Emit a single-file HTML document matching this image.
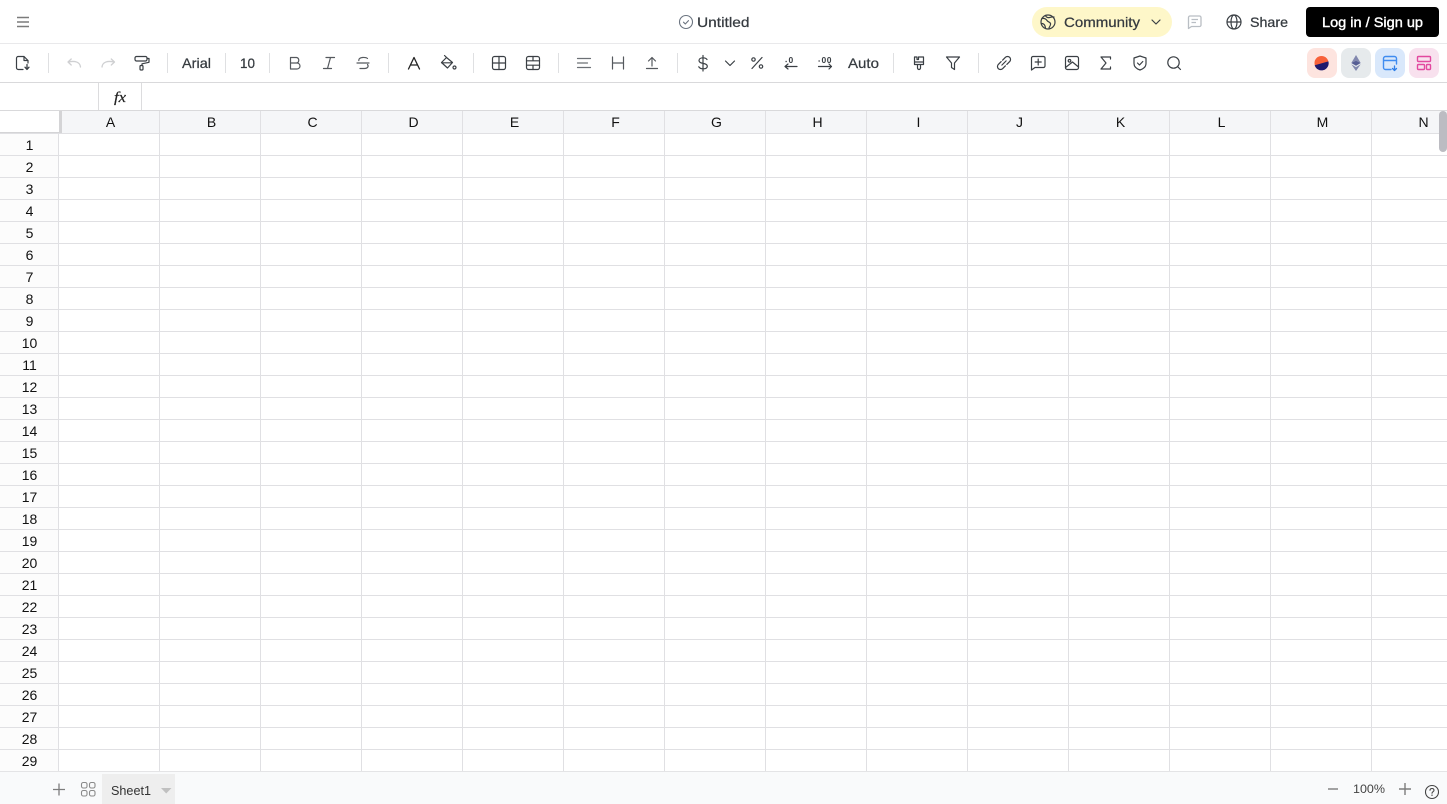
<!DOCTYPE html>
<html lang="en">
<head>
<meta charset="utf-8">
<title>Untitled</title>
<style>
html,body{margin:0;padding:0;background:#fff;width:1447px;height:804px;overflow:hidden}
svg{display:block;position:absolute;left:0;top:0}
text{font-family:"Liberation Sans",Arial,sans-serif;fill:#000}
.ui{fill:#363b40;font-size:14px;stroke:#363b40;stroke-width:.25}
.i{fill:none;stroke:#3a3f44;stroke-width:1.2;stroke-linecap:round;stroke-linejoin:round}
.g{fill:none;stroke:#55595e;stroke-width:1.2;stroke-linecap:round;stroke-linejoin:round}
.h{font-size:14px;text-anchor:middle;fill:#111}
</style>
</head>
<body>
<svg width="1447" height="804" viewBox="0 0 1447 804" xmlns="http://www.w3.org/2000/svg">
<rect width="1447" height="804" fill="#fff"/>

<!-- header backgrounds -->
<rect x="59" y="111" width="1388" height="22" fill="#f5f6f8"/>
<rect x="0" y="134" width="58" height="637" fill="#fcfcfc"/>
<rect x="59" y="111" width="3" height="22" fill="#d4d4d6"/>
<rect x="0" y="132" width="62" height="2" fill="#d4d4d6"/>

<!-- grid -->
<path stroke="#e0e0e3" stroke-width="1" fill="none" d="M58.500 134V771M159.500 111V771M260.500 111V771M361.500 111V771M462.500 111V771M563.500 111V771M664.500 111V771M765.500 111V771M866.500 111V771M967.500 111V771M1068.500 111V771M1169.500 111V771M1270.500 111V771M1371.500 111V771M0 133.500H1447M0 155.500H1447M0 177.500H1447M0 199.500H1447M0 221.500H1447M0 243.500H1447M0 265.500H1447M0 287.500H1447M0 309.500H1447M0 331.500H1447M0 353.500H1447M0 375.500H1447M0 397.500H1447M0 419.500H1447M0 441.500H1447M0 463.500H1447M0 485.500H1447M0 507.500H1447M0 529.500H1447M0 551.500H1447M0 573.500H1447M0 595.500H1447M0 617.500H1447M0 639.500H1447M0 661.500H1447M0 683.500H1447M0 705.500H1447M0 727.500H1447M0 749.500H1447"/>

<!-- bars lines -->
<path stroke="#e9e9eb" d="M0 43.500H1447"/>
<path stroke="#d9d9db" d="M0 82.500H1447M0 110.500H1447"/>
<path stroke="#dcdcde" d="M98.500 83V110M141.500 83V110"/>

<!-- column letters -->
<text class="h" x="110.500" y="127">A</text><text class="h" x="211.500" y="127">B</text><text class="h" x="312.500" y="127">C</text><text class="h" x="413.500" y="127">D</text><text class="h" x="514.500" y="127">E</text><text class="h" x="615.500" y="127">F</text><text class="h" x="716.500" y="127">G</text><text class="h" x="817.500" y="127">H</text><text class="h" x="918.500" y="127">I</text><text class="h" x="1019.500" y="127">J</text><text class="h" x="1120.500" y="127">K</text><text class="h" x="1221.500" y="127">L</text><text class="h" x="1322.500" y="127">M</text><text class="h" x="1423.500" y="127">N</text>

<!-- row numbers -->
<text class="h" x="29.500" y="150">1</text><text class="h" x="29.500" y="172">2</text><text class="h" x="29.500" y="194">3</text><text class="h" x="29.500" y="216">4</text><text class="h" x="29.500" y="238">5</text><text class="h" x="29.500" y="260">6</text><text class="h" x="29.500" y="282">7</text><text class="h" x="29.500" y="304">8</text><text class="h" x="29.500" y="326">9</text><text class="h" x="29.500" y="348">10</text><text class="h" x="29.500" y="370">11</text><text class="h" x="29.500" y="392">12</text><text class="h" x="29.500" y="414">13</text><text class="h" x="29.500" y="436">14</text><text class="h" x="29.500" y="458">15</text><text class="h" x="29.500" y="480">16</text><text class="h" x="29.500" y="502">17</text><text class="h" x="29.500" y="524">18</text><text class="h" x="29.500" y="546">19</text><text class="h" x="29.500" y="568">20</text><text class="h" x="29.500" y="590">21</text><text class="h" x="29.500" y="612">22</text><text class="h" x="29.500" y="634">23</text><text class="h" x="29.500" y="656">24</text><text class="h" x="29.500" y="678">25</text><text class="h" x="29.500" y="700">26</text><text class="h" x="29.500" y="722">27</text><text class="h" x="29.500" y="744">28</text><text class="h" x="29.500" y="766">29</text>

<!-- scrollbar -->
<rect x="1439" y="111" width="8" height="41" rx="4" fill="#bcbcc2"/>

<!-- top bar -->
<path d="M17 17.500H29M17 22H29M17 26.500H29" fill="none" stroke="#7b7b7b" stroke-width="1.500"/>
<circle cx="686" cy="22" r="6.500" fill="none" stroke="#6b7480" stroke-width="1.100"/>
<path d="M683.500 22.200l1.800 1.800 3.200-3.400" fill="none" stroke="#6b7480" stroke-width="1.100" stroke-linecap="round" stroke-linejoin="round"/>
<text class="ui" x="697" y="27" textLength="52.500" lengthAdjust="spacingAndGlyphs">Untitled</text>

<rect x="1032" y="7" width="140" height="30" rx="15" fill="#fef7c9"/>
<circle cx="1048" cy="22" r="7" class="i" stroke-width="1.300"/>
<path class="i" d="M1042 18.500c2.500-.5 4 .5 5 2s3 1.500 3.500 3-1 3-1.500 4.500M1045.500 15.500c.5 1.500 2 2.500 4 2s3-.8 4.500-.5M1041.500 23.500c2 0 3 1 3.500 2.500s.5 2 .5 2.500" />
<text class="ui" x="1064" y="27" textLength="76" lengthAdjust="spacingAndGlyphs">Community</text>
<path class="i" d="M1152 20l4 4 4-4" stroke-width="1.400"/>

<path d="M1188.500 17.500a1.500 1.500 0 0 1 1.500-1.500h9.500a1.500 1.500 0 0 1 1.500 1.500v7.500a1.500 1.500 0 0 1-1.500 1.500h-8l-3 2z" fill="none" stroke="#b9bec4" stroke-width="1.300" stroke-linejoin="round"/>
<path d="M1191.500 19.500h6.500M1191.500 22.500h4.500" stroke="#b9bec4" stroke-width="1.200" fill="none"/>

<circle cx="1234" cy="22" r="7" class="i" stroke-width="1.300"/>
<ellipse cx="1234" cy="22" rx="3" ry="7" class="i"/>
<path class="i" d="M1227 22H1241"/>
<text class="ui" x="1250" y="27" textLength="38" lengthAdjust="spacingAndGlyphs">Share</text>

<rect x="1306" y="7" width="133" height="30" rx="4" fill="#000"/>
<text x="1322" y="27" font-size="14" style="fill:#fff;stroke:#fff;stroke-width:.4" textLength="101" lengthAdjust="spacingAndGlyphs">Log in / Sign up</text>

<!-- separators -->
<path stroke="#dfe0e2" d="M48.500 53V73M167.500 53V73M225.500 53V73M269.500 53V73M388.500 53V73M473.500 53V73M558.500 53V73M677.500 53V73M893.500 53V73M978.500 53V73"/>

<!-- toolbar icons -->
<path class="i" stroke-width="1.300" d="M28 63V60.500L24 56.500H18.200A1.700 1.700 0 0 0 16.500 58.200V67.800A1.700 1.700 0 0 0 18.200 69.500H23M24 56.500V60.500H28"/>
<path d="M27 64.500V69M25 67.200L27 69.400L29 67.200" fill="none" stroke="#3a3f44" stroke-width="1.300" stroke-linecap="round" stroke-linejoin="round"/>

<path d="M80.500 67C80 62 75 60.500 68.500 62M71.200 59L68 62L71.200 65" fill="none" stroke="#cfd0d2" stroke-width="1.300" stroke-linecap="round" stroke-linejoin="round"/>
<path d="M102 67C102.500 62 107.500 60.500 114 62M111.300 59L114.500 62L111.300 65" fill="none" stroke="#cfd0d2" stroke-width="1.300" stroke-linecap="round" stroke-linejoin="round"/>

<rect x="135" y="56.500" width="12" height="4.500" rx="1.500" class="i" stroke-width="1.300"/>
<path class="i" stroke-width="1.300" d="M147 58.500H149V62.300L142 63.800V65.500"/>
<rect x="140" y="65.500" width="3" height="4.500" rx="1" class="i" stroke-width="1.300"/>

<text x="182" y="68" class="ui" textLength="29" lengthAdjust="spacingAndGlyphs">Arial</text>
<text x="240" y="68" class="ui" textLength="15" lengthAdjust="spacingAndGlyphs">10</text>

<path class="g" d="M290.500 57.500H296.500A2.800 2.800 0 0 1 296.500 63H290.500ZM290.500 63H297A3 3 0 0 1 297 69H290.500Z" stroke-linecap="butt"/>
<path class="g" d="M326 57.500H334.500M323.500 68.500H331.500M330.500 57.500L327.500 68.500"/>
<path class="g" d="M367.500 58.500C366.500 57.500 365 57.300 362.500 57.500C360 57.700 358.500 59 358.800 60.500M357 63H369M360 68.500H364.500C367.500 68.500 369 66.500 367.500 64.500"/>

<path d="M408.500 69L414 57.500L419.500 69M410.500 65H417.500" fill="none" stroke="#222" stroke-width="1.300" stroke-linecap="round" stroke-linejoin="round"/>

<path class="i" stroke-width="1.300" d="M441.500 62.500L446.500 57.500L452.500 62.500L447.500 68L441.500 62.500ZM441.500 62.800H452.300M444.500 55.500L446.800 57.700"/>
<circle cx="454.500" cy="67.500" r="1.500" class="i"/>

<rect x="492.500" y="56.500" width="13" height="13" rx="2" class="i" stroke-width="1.300"/>
<path class="i" stroke-width="1.300" d="M492.500 63H505.500M499 56.500V69.500"/>
<rect x="526.500" y="56.500" width="13" height="13" rx="2" class="i" stroke-width="1.300"/>
<path class="i" stroke-width="1.300" d="M526.500 60.800H539.500M526.500 65.200H539.500M533 56.500V60.800M533 65.200V69.500"/>

<path class="g" style="stroke:#6c7075" d="M577.500 58.500H590.500M577.500 63H587.500M577.500 67.500H590.500"/>
<path class="g" stroke-linecap="butt" d="M612.500 57V69M623.500 57V69M612.500 63H623.500"/>
<path class="g" d="M652 66V57.500M648.500 61L652 57.500L655.500 61M646.500 68.500H657.500"/>

<path class="i" d="M707 59.500C706 58 704.500 57.800 703 57.800C700.500 57.800 699 59 699 60.500C699 62.500 700.800 63 703 63.400C705.500 63.800 707.300 64.500 707.300 66.200C707.300 68 705.500 68.800 703 68.800C701 68.800 699.500 68 698.800 66.800M703 55.500V71"/>
<path class="i" d="M725.500 61L730 65.500L734.500 61"/>
<path class="i" d="M752 68.500L762 57.500"/>
<circle cx="753.500" cy="59.500" r="1.700" class="i"/>
<circle cx="761" cy="66.500" r="1.700" class="i"/>

<text x="788.500" y="63" font-size="8.500" font-weight="700" style="fill:#3a3f44">0</text>
<path d="M785.500 61.500h1.300" stroke="#3a3f44" stroke-width="1.300"/>
<path class="i" stroke-width="1.300" d="M785 66.500H797M788 64L785 66.500L788 69"/>
<text x="821.500" y="63" font-size="8.500" font-weight="700" style="fill:#3a3f44" textLength="10" lengthAdjust="spacing">00</text>
<path d="M818.500 61h1.300" stroke="#3a3f44" stroke-width="1.300"/>
<path class="i" stroke-width="1.300" d="M818.500 66.500H831.500M829 64L831.500 66.500L829 69"/>

<text x="848" y="68" class="ui" textLength="31" lengthAdjust="spacingAndGlyphs">Auto</text>

<path class="i" stroke-width="1.300" d="M914.500 64.500V57H917V59.500H918.500V57H923.500V64.500ZM914.500 62H923.500M917.500 64.500V68A1.500 1.500 0 0 0 920.500 68V64.500"/>
<path class="i" stroke-width="1.300" d="M946.500 57H959.500L954.500 63V69.500L951.500 67.500V63Z"/>

<g transform="rotate(-45 1004 63)"><path class="i" stroke-width="1.300" d="M1003 60H999A3 3 0 0 0 999 66H1003M1005 60H1009A3 3 0 0 1 1009 66H1005M1001 63H1007"/></g>
<path class="i" stroke-width="1.300" d="M1031.500 58A1.500 1.500 0 0 1 1033 56.500H1043.500A1.500 1.500 0 0 1 1045 58V66A1.500 1.500 0 0 1 1043.500 67.500H1035L1031.500 70Z"/>
<path class="i" stroke-width="1.300" d="M1038.200 59V65M1035.200 62H1041.200"/>
<rect x="1065.500" y="56.500" width="13" height="13" rx="1.800" class="i" stroke-width="1.300"/>
<circle cx="1069.500" cy="60.800" r="1.300" class="i"/>
<path class="i" stroke-width="1.300" d="M1065.500 67.500L1072.500 62L1078.500 67"/>
<path class="i" stroke-width="1.300" d="M1110.500 59V57H1101L1106 63L1101 69H1110.500V67"/>
<path class="i" stroke-width="1.300" d="M1140 56L1146 58V63.500C1146 66.500 1143.500 68.800 1140 70C1136.500 68.800 1134 66.500 1134 63.500V58Z"/>
<path class="i" d="M1137.500 63L1139.500 65L1142.800 61.500"/>
<circle cx="1173.500" cy="62.500" r="5.700" class="i" stroke-width="1.300"/>
<path class="i" stroke-width="1.300" d="M1177.800 66.800L1180.500 69.500"/>

<!-- right apps -->
<rect x="1307" y="48" width="30" height="30" rx="8" fill="#fde4df"/>
<circle cx="1321.500" cy="63" r="7" fill="#f8613a"/>
<path d="M1314.700 65.200L1328.400 61.400A7 7 0 0 1 1314.700 65.200Z" fill="#1f1a6e"/>
<rect x="1341" y="48" width="30" height="30" rx="8" fill="#e6eaec"/>
<path d="M1356 55L1351.300 63L1356 60.800L1360.700 63Z" fill="#8188ae"/>
<path d="M1351.300 63L1356 65.800L1360.700 63L1356 60.800Z" fill="#565e94"/>
<path d="M1351.300 64.300L1356 71L1360.700 64.300L1356 67.100Z" fill="#8188ae"/>
<rect x="1375" y="48" width="30" height="30" rx="8" fill="#d9e8fb"/>
<path d="M1396.500 64V58.500A2 2 0 0 0 1394.500 56.500H1385.500A2 2 0 0 0 1383.500 58.500V67.500A2 2 0 0 0 1385.500 69.500H1391M1383.500 60.500H1396.500" fill="none" stroke="#3f8cf0" stroke-width="1.400" stroke-linecap="round" stroke-linejoin="round"/>
<path d="M1394.500 66V70M1392.500 68.500L1394.500 70.500L1396.500 68.500" fill="none" stroke="#2f7fe8" stroke-width="1.300" stroke-linecap="round" stroke-linejoin="round"/>
<rect x="1409" y="48" width="30" height="30" rx="8" fill="#f8e1ee"/>
<rect x="1417.500" y="56.500" width="13" height="5" rx="1" fill="none" stroke="#e2489f" stroke-width="1.400"/>
<rect x="1417.500" y="64.500" width="7" height="5" rx="1" fill="none" stroke="#e2489f" stroke-width="1.400"/>
<rect x="1426.500" y="64.500" width="4" height="5" rx="1" fill="none" stroke="#e2489f" stroke-width="1.400"/>

<!-- fx -->
<text x="114" y="102" font-size="15" font-style="italic" style="font-family:'Liberation Serif',serif;fill:#222;stroke:#222;stroke-width:.2" textLength="12" lengthAdjust="spacingAndGlyphs">fx</text>

<!-- footer -->
<rect x="0" y="771.500" width="1447" height="32.500" fill="#f9fafb"/>
<path d="M0 771.500H1447" stroke="#e4e4e6"/>
<path d="M53 789.500H65M59 783.500V795.500" stroke="#7d7d7d" stroke-width="1.300" fill="none"/>
<g fill="none" stroke="#8a8a8a" stroke-width="1.100">
<rect x="81.500" y="782.500" width="5.500" height="5.500" rx="1.800"/>
<rect x="89.500" y="782.500" width="5.500" height="5.500" rx="1.800"/>
<rect x="81.500" y="790.500" width="5.500" height="5.500" rx="1.800"/>
<rect x="89.500" y="790.500" width="5.500" height="5.500" rx="1.800"/>
</g>
<rect x="102" y="774" width="73" height="30" fill="#eeeeee"/>
<text x="111" y="795" font-size="13" style="fill:#333" textLength="40" lengthAdjust="spacingAndGlyphs">Sheet1</text>
<path d="M161 788H171.500L166.200 793.500Z" fill="#c0c0c0"/>

<path d="M1328 789H1338" stroke="#7d7d7d" stroke-width="1.400" fill="none"/>
<text x="1353" y="793" font-size="12" style="fill:#444" textLength="32" lengthAdjust="spacingAndGlyphs">100%</text>
<path d="M1399 789H1411M1405 783V795" stroke="#7d7d7d" stroke-width="1.400" fill="none"/>
<circle cx="1432" cy="792" r="6.500" fill="none" stroke="#444" stroke-width="1.100"/>
<path d="M1430 790.300C1430 789 1431 788.500 1432 788.500C1433.200 788.500 1434 789.300 1434 790.300C1434 791.700 1432 791.800 1432 793.300" fill="none" stroke="#444" stroke-width="1.100" stroke-linecap="round"/>
<circle cx="1432" cy="795.200" r=".7" fill="#444"/>
</svg>
</body>
</html>
